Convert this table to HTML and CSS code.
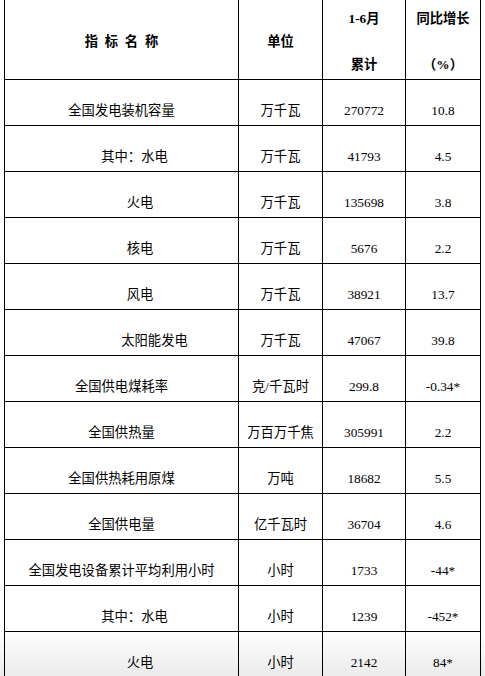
FILE: index.html
```html
<!DOCTYPE html>
<html lang="zh-CN">
<head>
<meta charset="utf-8">
<title>1-6月电力统计</title>
<link rel="stylesheet" href="styles.css">
</head>
<body>
<table class="stats">
  <thead>
    <tr>
      <th class="c1"><div class="hsingle"><span class="spaced">指 标 名 称</span></div></th>
      <th class="c2"><div class="hsingle">单位</div></th>
      <th class="c3"><div class="hdouble"><span class="l1">1-6月</span><span class="l2">累计</span></div></th>
      <th class="c4"><div class="hdouble"><span class="l1">同比增长</span><span class="l2">（%）</span></div></th>
    </tr>
  </thead>
  <tbody>
    <tr><td>全国发电装机容量</td><td>万千瓦</td><td>270772</td><td>10.8</td></tr>
    <tr><td><span class="ind1">其中：水电</span></td><td>万千瓦</td><td>41793</td><td>4.5</td></tr>
    <tr><td><span class="ind2">火电</span></td><td>万千瓦</td><td>135698</td><td>3.8</td></tr>
    <tr><td><span class="ind2">核电</span></td><td>万千瓦</td><td>5676</td><td>2.2</td></tr>
    <tr><td><span class="ind2">风电</span></td><td>万千瓦</td><td>38921</td><td>13.7</td></tr>
    <tr><td><span class="ind3">太阳能发电</span></td><td>万千瓦</td><td>47067</td><td>39.8</td></tr>
    <tr><td>全国供电煤耗率</td><td>克/千瓦时</td><td>299.8</td><td>-0.34*</td></tr>
    <tr><td>全国供热量</td><td>万百万千焦</td><td>305991</td><td>2.2</td></tr>
    <tr><td>全国供热耗用原煤</td><td>万吨</td><td>18682</td><td>5.5</td></tr>
    <tr><td>全国供电量</td><td>亿千瓦时</td><td>36704</td><td>4.6</td></tr>
    <tr><td>全国发电设备累计平均利用小时</td><td>小时</td><td>1733</td><td>-44*</td></tr>
    <tr><td><span class="ind1">其中：水电</span></td><td>小时</td><td>1239</td><td>-452*</td></tr>
    <tr><td><span class="ind2">火电</span></td><td>小时</td><td>2142</td><td>84*</td></tr>
  </tbody>
</table>
<div class="fade"></div>
</body>
</html>
```

FILE: styles.css
```css
html, body {
  margin: 0;
  padding: 0;
  background: #ffffff;
}

body {
  font-family: "Liberation Serif", "Noto Sans CJK SC", serif;
  font-size: 13.3px;
  color: #000000;
  overflow: hidden;
}

.stats {
  border-collapse: separate;
  border-spacing: 0;
  table-layout: fixed;
  width: 477px;
  margin-left: 4px;
  border-left: 1px solid #000000;
}

.stats th,
.stats td {
  box-sizing: border-box;
  border-right: 1px solid #000000;
  border-bottom: 1px solid #000000;
  padding: 0;
  text-align: center;
  vertical-align: top;
  line-height: 16px;
  white-space: nowrap;
}

.stats th {
  height: 80px;
  font-weight: bold;
}

.c1 { width: 234px; }
.c2 { width: 84px; }
.c3 { width: 83px; }
.c4 { width: 75px; }

.hsingle {
  padding-top: 34px;
}

.hdouble {
  display: flex;
  flex-direction: column;
  align-items: center;
  padding-top: 11px;
}

.hdouble .l2 {
  margin-top: 29.5px;
}

.spaced {
  word-spacing: 3.4px;
}

.stats td {
  height: 46px;
  padding-top: 23px;
}

.ind1 { padding-left: 26px; }
.ind2 { padding-left: 37px; }
.ind3 { padding-left: 66px; }

.fade {
  position: fixed;
  left: 0;
  right: 0;
  bottom: 0;
  height: 46px;
  pointer-events: none;
  background: linear-gradient(to bottom, rgba(0, 0, 0, 0), rgba(0, 0, 0, 0.08));
}
```
